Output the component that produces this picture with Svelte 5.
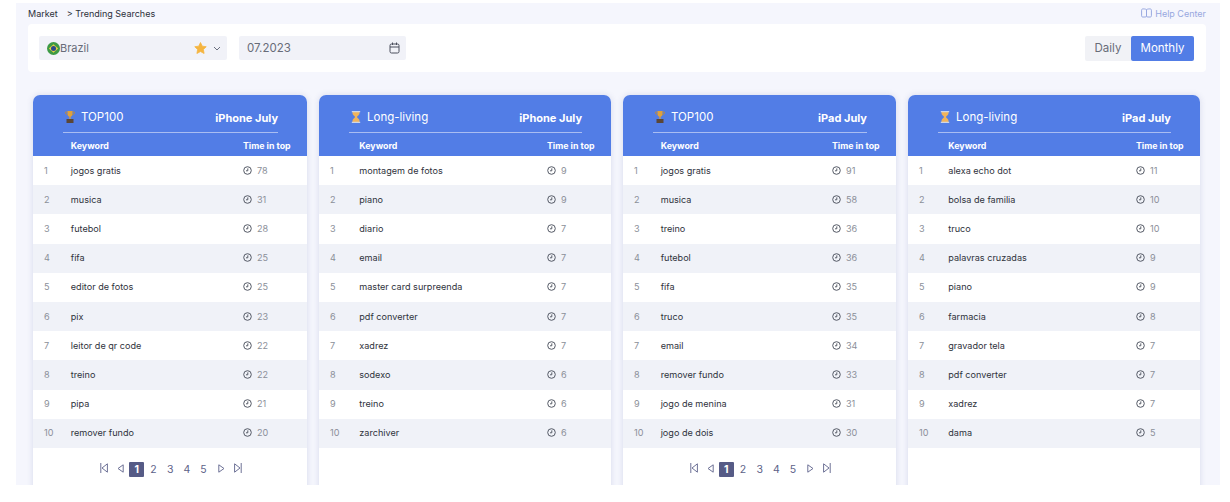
<script lang="ts">
// Trending searches: four ranked keyword lists, two of them with a pager.
const boards = [
  {
    kind: "top", title: "TOP100", device: "iPhone July", pager: true,
    rows: [["jogos gratis", 78], ["musica", 31], ["futebol", 28], ["fifa", 25], ["editor de fotos", 25],
      ["pix", 23], ["leitor de qr code", 22], ["treino", 22], ["pipa", 21], ["remover fundo", 20]],
  },
  {
    kind: "long", title: "Long-living", device: "iPhone July", pager: false,
    rows: [["montagem de fotos", 9], ["piano", 9], ["diario", 7], ["email", 7], ["master card surpreenda", 7],
      ["pdf converter", 7], ["xadrez", 7], ["sodexo", 6], ["treino", 6], ["zarchiver", 6]],
  },
  {
    kind: "top", title: "TOP100", device: "iPad July", pager: true,
    rows: [["jogos gratis", 91], ["musica", 58], ["treino", 36], ["futebol", 36], ["fifa", 35],
      ["truco", 35], ["email", 34], ["remover fundo", 33], ["jogo de menina", 31], ["jogo de dois", 30]],
  },
  {
    kind: "long", title: "Long-living", device: "iPad July", pager: false,
    rows: [["alexa echo dot", 11], ["bolsa de familia", 10], ["truco", 10], ["palavras cruzadas", 9], ["piano", 9],
      ["farmacia", 8], ["gravador tela", 7], ["pdf converter", 7], ["xadrez", 7], ["dama", 5]],
  },
];
const pages = [1, 2, 3, 4, 5];
</script>

<div class="page">
  <nav class="crumbs">
    <span>Market</span>
    <span class="crumb-sep">&gt; Trending Searches</span>
    <a class="help" href="#help">
      <svg width="11" height="10" viewBox="0 0 11 10" fill="none" stroke="currentColor" stroke-width="1">
        <path d="M5.5 1.6 C4.5 .8 2 .8 1.4 1 C.8 1.2 .6 1.6 .6 2.2 V7.8 C.6 8.6 1 9 1.6 9 H4.2 C4.9 9 5.5 8.8 5.5 8.2 C5.5 8.8 6.1 9 6.8 9 H9.4 C10 9 10.4 8.6 10.4 7.8 V2.2 C10.4 1.6 10.2 1.2 9.6 1 C9 .8 6.5 .8 5.5 1.6 Z M5.5 1.6 V8.2" />
      </svg>
      Help Center
    </a>
  </nav>

  <section class="filters">
    <div class="select">
      <svg class="flag" width="13" height="13" viewBox="0 0 13 13">
        <circle cx="6.5" cy="6.5" r="6.5" fill="#3d9a45" />
        <path d="M6.5 2.2 L11.2 6.5 L6.5 10.8 L1.8 6.5 Z" fill="#e3cf45" />
        <circle cx="6.5" cy="6.5" r="2.5" fill="#2b4a8c" />
      </svg>
      <span class="country">Brazil</span>
      <svg class="star" width="13" height="12" viewBox="0 0 24 23">
        <path d="M12 1 L15.4 8 L23 9 L17.5 14.4 L18.9 22 L12 18.3 L5.1 22 L6.5 14.4 L1 9 L8.6 8 Z" fill="#f5b540" stroke="#f5b540" stroke-linejoin="round" stroke-width="1.5" />
      </svg>
      <svg class="chev" width="8" height="5" viewBox="0 0 8 5" fill="none" stroke="#6b7080" stroke-width="1">
        <path d="M1 1 L4 4 L7 1" />
      </svg>
    </div>
    <div class="date">
      <span>07.2023</span>
      <svg width="11" height="12" viewBox="0 0 11 12" fill="none" stroke="#4a4e5c" stroke-width="1">
        <rect x="1" y="2" width="9" height="9" rx="1.5" />
        <path d="M1 5 H10 M3.5 .5 V3 M7.5 .5 V3" />
      </svg>
    </div>
    <div class="toggle">
      <button class="tab">Daily</button>
      <button class="tab active">Monthly</button>
    </div>
  </section>

  <main class="boards">
    {#each boards as board}
      <article class="board">
        <header class="board-head">
          <div class="head-top">
            <span class="head-title">
              {#if board.kind === "top"}
                <svg width="10" height="12" viewBox="0 0 10 12">
                  <path d="M2.5 0 H7.5 V3 C7.5 4.6 6.2 5.6 5.6 5.8 V8 H4.4 V5.8 C3.8 5.6 2.5 4.6 2.5 3 Z" fill="#e0a23c" />
                  <path d="M2.5 1 H.6 V2 C.6 3 1.6 3.6 2.8 3.8 M7.5 1 H9.4 V2 C9.4 3 8.4 3.6 7.2 3.8" fill="none" stroke="#c98d30" stroke-width=".8" />
                  <rect x="1.5" y="8" width="7" height="4" fill="#5b4636" />
                </svg>
              {:else}
                <svg width="10" height="12" viewBox="0 0 10 12">
                  <path d="M1.5 .8 H8.5 V2.6 C8.5 4 6 5.2 6 6 C6 6.8 8.5 8 8.5 9.4 V11.2 H1.5 V9.4 C1.5 8 4 6.8 4 6 C4 5.2 1.5 4 1.5 2.6 Z" fill="#f1b45c" />
                  <path d="M.8 .6 H9.2 M.8 11.4 H9.2" stroke="#cfd6e6" stroke-width="1.2" />
                </svg>
              {/if}
              {board.title}
            </span>
            <span class="head-device">{board.device}</span>
          </div>
          <div class="cols">
            <span></span>
            <span>Keyword</span>
            <span>Time in top</span>
          </div>
        </header>

        <ul class="rows">
          {#each board.rows as row, i}
            <li class="row">
              <span class="rank">{i + 1}</span>
              <span class="word">{row[0]}</span>
              <span class="time">
                <svg width="9" height="9" viewBox="0 0 9 9" fill="none" stroke="#555a66" stroke-width="1">
                  <circle cx="4.5" cy="4.5" r="3.8" />
                  <path d="M4.8 2.4 V4.8 H3" />
                </svg>
                {row[1]}
              </span>
            </li>
          {/each}
        </ul>

        {#if board.pager}
          <div class="pager">
            <svg width="8" height="10" viewBox="0 0 8 10"><path d="M.8 0 V10 M7.4 .8 L2 5 L7.4 9.2 Z" /></svg>
            <svg class="pager-prev" width="7" height="9" viewBox="0 0 7 9"><path d="M6.2 .8 L1 4.5 L6.2 8.2 Z" /></svg>
            {#each pages as p}
              <span class="pg" class:on={p === 1}>{p}</span>
            {/each}
            <svg class="pager-next" width="7" height="9" viewBox="0 0 7 9"><path d="M.8 .8 L6 4.5 L.8 8.2 Z" /></svg>
            <svg width="8" height="10" viewBox="0 0 8 10"><path d="M7.2 0 V10 M.6 .8 L6 5 L.6 9.2 Z" /></svg>
          </div>
        {/if}
      </article>
    {/each}
  </main>
</div>

<style>
:global(body) {
  background: #fff;
  font-family: Inter, "Liberation Sans", sans-serif;
}
.page {
  box-sizing: border-box;
  width: 1204px;
  height: 482px;
  margin: 3px 0 0 16px;
  background: #f5f6fd;
  overflow: hidden;
  padding: 0 14px 0 12px;
}
.crumbs {
  display: flex;
  align-items: center;
  height: 21px;
  padding-bottom: 1px;
  box-sizing: border-box;
  font-size: 9px;
  color: #2c2f3a;
}
.crumb-sep {
  margin-left: 9px;
}
.help {
  margin-left: auto;
  display: flex;
  align-items: center;
  gap: 3px;
  color: #98a8e0;
  text-decoration: none;
}
.filters {
  display: flex;
  align-items: center;
  height: 48px;
  background: #fff;
  border-radius: 4px;
  padding: 0 12px 0 11px;
}
.select,
.date {
  display: flex;
  align-items: center;
  background: #f1f2f8;
  border-radius: 2px;
  height: 24px;
  color: #686c78;
}
.select {
  width: 188px;
  box-sizing: border-box;
  padding: 0 6px 0 8px;
  font-size: 11px;
}
.country {
  flex: 1;
}
.star {
  margin-right: 6px;
}
.date {
  width: 167px;
  box-sizing: border-box;
  margin-left: 12px;
  padding: 0 6px 0 8px;
  font-size: 11.5px;
  justify-content: space-between;
}
.toggle {
  display: flex;
  margin-left: auto;
  height: 25px;
}
.tab {
  appearance: none;
  border: none;
  font: inherit;
  font-size: 11.5px;
  padding: 0;
  background: #f1f2f6;
  color: #686c78;
  width: 46px;
  border-radius: 2px 0 0 2px;
}
.tab.active {
  width: 63px;
  background: #527de6;
  color: #fff;
  border-radius: 2px;
}
.boards {
  display: grid;
  grid-template-columns: 274fr 292fr 273fr 292fr;
  gap: 12px;
  margin: 23px 0 0 5px;
  width: 1167px;
}
.board {
  background: #fff;
  border-radius: 7px 7px 0 0;
  height: 400px;
  box-shadow: 0 0 6px rgba(70, 80, 140, 0.16);
}
.board-head {
  background: #527de6;
  border-radius: 7px 7px 0 0;
  color: #fff;
  height: 61px;
}
.head-top {
  display: flex;
  align-items: center;
  justify-content: space-between;
  height: 38px;
  padding-top: 9px;
  margin: 0 29px 0 30px;
  border-bottom: 1.5px solid #a9bdf2;
  box-sizing: border-box;
}
.head-title {
  display: flex;
  align-items: center;
  gap: 6px;
  margin-left: 2px;
  font-size: 11.5px;
  padding-bottom: 3px;
}
.head-device {
  font-size: 11px;
  font-weight: 700;
}
.cols {
  display: grid;
  grid-template-columns: 13.8% 1fr 64px;
  align-items: center;
  height: 23px;
  padding-top: 1px;
  box-sizing: border-box;
  font-size: 8.8px;
  font-weight: 700;
}
.rows {
  list-style: none;
  margin: 0;
  padding: 0;
}
.row {
  display: grid;
  grid-template-columns: 13.8% 1fr 64px;
  align-items: center;
  box-sizing: border-box;
  height: 29.2px;
  padding-bottom: 1px;
  font-size: 9.1px;
  color: #2f323c;
}
.row:nth-child(even) {
  background: #f0f2f8;
}
.rank {
  padding-left: 11px;
  color: #8b8f99;
}
.time {
  display: flex;
  align-items: center;
  gap: 5px;
  color: #8b8f99;
}
.pager {
  display: flex;
  align-items: center;
  justify-content: center;
  height: 43px;
  padding-left: 2px;
  box-sizing: border-box;
  font-size: 10.5px;
  color: #5d6288;
}
.pager svg {
  fill: none;
  stroke: #6d7196;
  stroke-width: 1;
  margin-top: -2px;
}
.pager-prev {
  margin-left: 9px;
  margin-right: 5px;
}
.pager-next {
  margin-left: 5px;
  margin-right: 9px;
}
.pg {
  width: 15px;
  height: 15px;
  margin-right: 1.7px;
  display: flex;
  align-items: center;
  justify-content: center;
  border-radius: 1px;
}
.pg.on {
  background: #565b86;
  color: #fff;
  font-weight: 700;
}
</style>
